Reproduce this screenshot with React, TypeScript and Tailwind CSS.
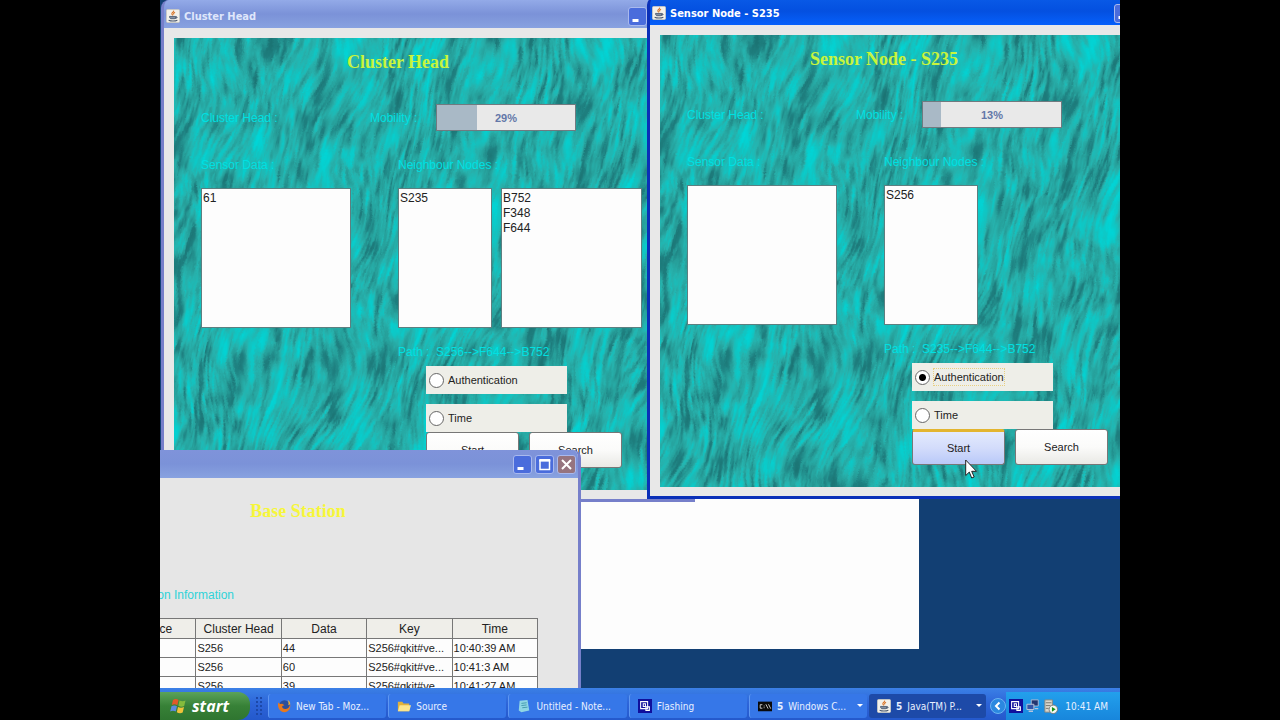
import React, { useId } from "react";

interface NodeWindowProps {
  title: string;
  active?: boolean;
  mobility: number;
  sensorData: string;
  neighbours: string;
  routes?: string;
  path: string;
  mode?: "auth" | "time";
}

const readings = [
  { source: "", head: "S256", data: "44", key: "S256#qkit#ve...", time: "10:40:39 AM" },
  { source: "", head: "S256", data: "60", key: "S256#qkit#ve...", time: "10:41:3 AM" },
  { source: "", head: "S256", data: "39", key: "S256#qkit#ve...", time: "10:41:27 AM" },
];

function JavaIcon() {
  return (
    <svg viewBox="0 0 16 16" className="h-[14px] w-[14px] shrink-0">
      <rect x="0.5" y="0.5" width="15" height="15" rx="1.5" fill="#f3f1ea" stroke="#c9c9c4" />
      <path d="M8.6 1.8c1 1.6-2.4 2.2-1.9 3.8.2.7.9 1 .9 1.7M10.3 3.6C8.6 4.6 8.3 5.3 9 6.3" fill="none" stroke="#d9772c" strokeWidth="1.3" />
      <path d="M4 8.5h7.2c0 1.4-.4 2.2-1.1 2.6H5.2C4.4 10.6 4 9.7 4 8.5zM11.3 8.8c2-.2 2 1.8-.9 2" fill="#8390a2" stroke="#4b5a70" />
      <path d="M3 12.8c2.5 1.2 7.5 1.2 10 0" fill="none" stroke="#4b5a70" strokeWidth="1.2" />
    </svg>
  );
}

function WindowButton({ kind }: { kind: "minimize" | "maximize" | "close" }) {
  const fill = kind === "close" ? "bg-[#96747f]" : "bg-[#4a6cdc]";
  return (
    <button aria-label={kind} className={`h-[19px] w-[19px] shrink-0 rounded-[3px] border border-[#a9b9ee] ${fill}`}>
      <svg viewBox="0 0 17 17" className="h-full w-full" fill="none" stroke="#fff">
        {kind === "minimize" && <path d="M3.5 12.5h6" strokeWidth="3" />}
        {kind === "maximize" && <path d="M4 4.5h9.5M4 4v9.5h9.5V4" strokeWidth="1.5" />}
        {kind === "maximize" && <path d="M3.3 4.2h11" strokeWidth="2.5" />}
        {kind === "close" && <path d="M4 4l9 9M13 4l-9 9" strokeWidth="2" />}
      </svg>
    </button>
  );
}

// Brushed teal backdrop: long slanted strands over broad light and dark patches
function Texture() {
  const id = useId();
  return (
    <svg viewBox="0 0 510 452" className="absolute inset-0 h-full w-full" aria-hidden="true">
      <filter id={id} x="0" y="0" width="100%" height="100%" colorInterpolationFilters="sRGB">
        <feTurbulence type="fractalNoise" baseFrequency="0.014 0.01" numOctaves="1" seed="4" result="bend" />
        <feTurbulence type="fractalNoise" baseFrequency="0.19 0.032" numOctaves="3" seed="11" result="grain" />
        <feDisplacementMap in="grain" in2="bend" scale="60" xChannelSelector="R" yChannelSelector="G" result="strands" />
        <feTurbulence type="fractalNoise" baseFrequency="0.04 0.016" numOctaves="3" seed="23" result="patches" />
        <feComposite in="strands" in2="patches" operator="arithmetic" k2="0.55" k3="0.55" k4="-0.03" />
        <feColorMatrix type="matrix" values="1 0 0 0 0  1 0 0 0 0  1 0 0 0 0  0 0 0 0 1" />
        <feComponentTransfer>
          <feFuncR type="table" tableValues="0.1 0.1 0.11 0.12 0.15 0.15 0.07 0.02 0 0 0" />
          <feFuncG type="table" tableValues="0.45 0.45 0.46 0.5 0.62 0.7 0.77 0.82 0.84 0.84 0.84" />
          <feFuncB type="table" tableValues="0.45 0.45 0.46 0.5 0.6 0.68 0.76 0.82 0.85 0.85 0.85" />
        </feComponentTransfer>
      </filter>
      <rect width="510" height="452" fill="#20b4b0" />
      <g transform="rotate(12 255 226)">
        <rect x="-120" y="-120" width="750" height="700" filter={`url(#${id})`} />
      </g>
    </svg>
  );
}

function Radio({ name, label, checked }: { name: string; label: string; checked?: boolean }) {
  return (
    <label className="flex h-7 w-[141px] items-center gap-1 bg-[#eeeee8] pl-[3px] text-[11px] text-[#222]">
      <input
        type="radio"
        name={name}
        defaultChecked={checked}
        className="h-[15px] w-[15px] appearance-none rounded-full border border-[#666] bg-white checked:bg-[radial-gradient(circle,#000_0_3px,#fff_4px)]"
      />
      <span className={checked ? "outline-1 outline-dotted outline-[#e8cf80]" : ""}>{label}</span>
    </label>
  );
}

function NodeWindow({ title, active, mobility, sensorData, neighbours, routes, path, mode }: NodeWindowProps) {
  const id = useId();
  const field = "block h-[140px] resize-none border border-[#5d7f80] bg-[#fdfdfd] px-px pt-[2px] text-xs leading-[15px] text-[#222] outline-none";
  const button = "h-9 w-[93px] rounded-[3px] border border-[#777] text-[11px] text-[#222]";
  return (
    <section
      className={`w-[534px] overflow-hidden rounded-t-lg border-x-[3px] border-b-[3px] font-['Liberation_Sans',Arial,sans-serif] ${
        active ? "border-[#0a2fb8] bg-[#0a2fb8]" : "border-[#767fca] bg-[#767fca]"
      }`}
    >
      <header
        className={`flex h-7 items-center gap-1 pt-1 pl-[2px] ${
          active
            ? "bg-linear-to-b from-[#0a5be8] via-[#0450e0] to-[#0660fb] text-white"
            : "bg-linear-to-b from-[#93aae8] via-[#7b92d8] to-[#88a2e0] text-[#dfe6fb]"
        }`}
      >
        <JavaIcon />
        <h2 className="w-[440px] pt-[2px] font-['DejaVu_Sans_Condensed','DejaVu_Sans',sans-serif] text-[11px] font-bold">{title}</h2>
        <WindowButton kind="minimize" />
      </header>
      <div className="bg-[#e8e8e8] px-[10px] pt-[10px] pb-[9px]">
        <div className="relative h-[452px] overflow-hidden">
          <Texture />
          <div className="relative">
            <h1 className="w-[448px] pt-3 text-center font-['Liberation_Serif',serif] text-lg leading-6 font-bold text-[#c8f53c]">
              {title}
            </h1>
            <div className="mt-[30px] flex h-[27px] items-center pl-[27px] text-xs text-[#00e0e2]">
              <span className="w-[169px]">Cluster Head :</span>
              <span className="w-[66px]">Mobility :</span>
              <div
                role="progressbar"
                aria-label="Mobility"
                aria-valuenow={mobility}
                className="relative h-[27px] w-[140px] border border-[#707a80] bg-[#e9e9e9]"
              >
                <div className="h-full bg-[#a9b9c6]" style={{ width: `${mobility}%` }} />
                <span className="absolute inset-0 text-center text-[11px] leading-[26px] font-bold text-[#6377a8]">{mobility}%</span>
              </div>
            </div>
            <div className="mt-[26px] flex pl-[27px] text-xs leading-4 text-[#00e0e2]">
              <label htmlFor={`${id}-data`} className="w-[197px]">Sensor Data :</label>
              <label htmlFor={`${id}-near`}>Neighbour Nodes :</label>
            </div>
            <div className="mt-[15px] flex pl-[27px]">
              <textarea id={`${id}-data`} readOnly defaultValue={sensorData} className={`${field} mr-[47px] w-[150px]`} />
              <textarea id={`${id}-near`} readOnly defaultValue={neighbours} className={`${field} mr-[9px] w-[94px]`} />
              {routes && <textarea aria-label="Routes" readOnly defaultValue={routes} className={`${field} w-[141px]`} />}
            </div>
            <p className="mt-4 flex pl-[224px] text-xs leading-4 text-[#00e0e2]">
              <span className="w-[38px]">Path :</span>
              <span>{path}</span>
            </p>
            <div className="mt-[6px] flex flex-col gap-[10px] pl-[252px]">
              <Radio name={`${id}-mode`} label="Authentication" checked={mode === "auth"} />
              <Radio name={`${id}-mode`} label="Time" checked={mode === "time"} />
            </div>
            <div className="flex gap-[10px] pl-[252px]">
              <button
                className={`${button} ${
                  active
                    ? "border-t-[3px] border-t-[#e3b52f] bg-linear-to-b from-[#e3eafd] via-[#d3dcfb] to-[#b9c9f8]"
                    : "bg-linear-to-b from-white via-[#fbfbfa] to-[#e9e9e5]"
                }`}
              >
                Start
              </button>
              <button className={`${button} bg-linear-to-b from-white via-[#fbfbfa] to-[#e9e9e5]`}>Search</button>
            </div>
          </div>
        </div>
      </div>
    </section>
  );
}

function BaseStationWindow() {
  const cell = "h-[19px] border border-[#777] px-px";
  return (
    <section className="w-[521px] overflow-hidden rounded-t-lg border-x-[3px] border-[#767fca] bg-[#e6e6e6] font-['Liberation_Sans',Arial,sans-serif]">
      <header className="flex h-7 items-center justify-end gap-[3px] bg-linear-to-b from-[#7f93da] via-[#7b92d8] to-[#88a2e0] pr-[2px]">
        <WindowButton kind="minimize" />
        <WindowButton kind="maximize" />
        <WindowButton kind="close" />
      </header>
      <h1 className="mt-[21px] w-[470px] text-center font-['Liberation_Serif',serif] text-lg leading-6 font-bold text-[#f6f63a]">
        Base Station
      </h1>
      <p className="mt-16 w-[171px] text-right text-xs leading-4 whitespace-nowrap text-[#2fd3d8]">Transmission Information</p>
      <table className="mt-[15px] ml-[47px] w-[428px] table-fixed border-collapse border border-[#666] bg-[#fdfdfd] text-[11px] leading-4 text-[#222]">
        <thead className="bg-[#efeee9] text-xs">
          <tr>
            {["Source", "Cluster Head", "Data", "Key", "Time"].map((name) => (
              <th key={name} className="h-5 border border-[#777] p-0 font-normal">{name}</th>
            ))}
          </tr>
        </thead>
        <tbody>
          {readings.map((row) => (
            <tr key={row.time}>
              <td className={cell}>{row.source}</td>
              <td className={cell}>{row.head}</td>
              <td className={cell}>{row.data}</td>
              <td className={cell}>{row.key}</td>
              <td className={cell}>{row.time}</td>
            </tr>
          ))}
        </tbody>
      </table>
    </section>
  );
}

function FirefoxIcon() {
  return (
    <svg viewBox="0 0 16 16" className="h-[14px] w-[14px] shrink-0">
      <circle cx="8.5" cy="7.5" r="6" fill="#2c4f9c" />
      <path d="M1.5 4C0 9 3 15 8.5 15 13 15 16 11 15 6c-.5 3-2 5-5 5.3C7 11.5 5.5 10 6 8l2.5-1L6 5.5 3.5 5.8z" fill="#e8791e" />
      <path d="M15 6c.5-2-1-4-3-5 1.3 2 1.5 4 .8 6z" fill="#f2b233" />
    </svg>
  );
}

function FolderIcon() {
  return (
    <svg viewBox="0 0 16 16" className="h-[14px] w-[14px] shrink-0">
      <path d="M1 3h5l1.5 2H14v9H1z" fill="#e0b13c" />
      <path d="M3 7h13l-2 7H1z" fill="#fbe58e" />
    </svg>
  );
}

function NotepadIcon() {
  return (
    <svg viewBox="0 0 16 16" className="h-[14px] w-[14px] shrink-0">
      <path d="M3 2l9-1 2 12-9 2-3-2z" fill="#8fd6e4" />
      <path d="M5 5l6-.7M5 7.500l6-.7M6 10l6-.7" stroke="#3d93a8" />
    </svg>
  );
}

function FlashingIcon() {
  return (
    <svg viewBox="0 0 16 16" className="h-[14px] w-[14px] shrink-0">
      <rect width="16" height="16" fill="#10109c" />
      <path d="M3 3h8v8H3zM6 5.500h2.500v3H6zM9 9h4v4H9z" fill="none" stroke="#fff" strokeWidth="1.2" />
    </svg>
  );
}

function ConsoleIcon() {
  return (
    <svg viewBox="0 0 16 16" className="h-[14px] w-[14px] shrink-0">
      <rect y="3" width="16" height="11" fill="#0a0a0a" />
      <path d="M5 6.500H2.500v4H5M7 7.500v1M7 9.500v1M9 6l2.500 5M12 6l2.500 5" fill="none" stroke="#ddd" />
    </svg>
  );
}

function NetworkIcon() {
  return (
    <svg viewBox="0 0 16 16" className="h-[14px] w-[14px]">
      <path d="M6 1h8v7H6z" fill="#23366f" stroke="#b6c4dc" />
      <path d="M1 6h8v6H1z" fill="#3456a8" stroke="#c6cfdf" />
      <path d="M3 14h5M10 11h4" stroke="#b6c4dc" strokeWidth="1.5" />
    </svg>
  );
}

function ServerIcon() {
  return (
    <svg viewBox="0 0 16 16" className="h-[15px] w-[15px]">
      <path d="M2 1h8v13H2z" fill="#d8d6cc" stroke="#8c8a80" />
      <path d="M3 4h6M3 7h5M3 10h3" stroke="#77756c" />
      <circle cx="11" cy="11" r="4.5" fill="#f4f8f2" stroke="#777" />
      <path d="M9.5 8.5l4 2.5-4 2.5z" fill="#129012" />
    </svg>
  );
}

const tasks = [
  { label: "New Tab - Moz...", Icon: FirefoxIcon },
  { label: "Source", Icon: FolderIcon },
  { label: "Untitled - Note...", Icon: NotepadIcon },
  { label: "Flashing", Icon: FlashingIcon },
  { label: "Windows C...", Icon: ConsoleIcon, count: 5 },
  { label: "Java(TM) P...", Icon: JavaIcon, count: 5, active: true },
];

function Taskbar() {
  return (
    <footer className="flex h-8 items-end bg-linear-to-b from-[#3b80e6] via-[#2d64d8] to-[#2459cc] font-['DejaVu_Sans_Condensed','DejaVu_Sans',sans-serif] text-[10px] text-[#e8f0ff]">
      <button className="flex h-7 w-[90px] shrink-0 items-center gap-1 rounded-r-xl bg-linear-to-b from-[#5ba35a] via-[#378137] to-[#2f7530] pl-[10px] font-['Open_Sans',sans-serif] text-base font-bold text-white italic">
        <svg viewBox="0 0 18 18" className="h-[18px] w-[18px]">
          <path d="M3 3c2-1.5 4-1 5.5 0L7.300 8.200C5.500 7 3.700 7 1.800 8z" fill="#e2592a" />
          <path d="M9.5 3.500c2 1 4 1 6 0L14.200 9c-2 1-4 .8-5.800-.3z" fill="#84bb3c" />
          <path d="M1.500 9.300c2-1 3.700-1 5.500 0L5.700 14.500C4 13.500 2 13.500.2 14.500z" fill="#5d8be0" />
          <path d="M8 10c2 1 4 1 6 0l-1.300 5.500c-2 1-4 .8-5.900-.3z" fill="#f0c23a" />
        </svg>
        start
      </button>
      <div className="flex h-7 w-[18px] shrink-0 items-center justify-center">
        <div className="h-5 w-2 bg-[radial-gradient(circle,#1c48a8_1px,transparent_1px)] bg-size-[4px_4px]" />
      </div>
      <div className="flex min-w-0 flex-1 gap-[2px] pb-[2px]">
        {tasks.map(({ label, Icon, count, active }) => (
          <button
            key={label}
            className={`flex h-6 min-w-0 flex-1 items-center gap-[5px] rounded-[3px] pl-2 whitespace-nowrap ${
              active ? "bg-[#1d4aa8]" : "border-l border-[#5f97f2] bg-[#3677e8]"
            }`}
          >
            <Icon />
            {count && <b>{count}</b>}
            <span>{label}</span>
            {count && (
              <svg viewBox="0 0 6 4" className="mr-1 ml-auto h-1 w-[6px] shrink-0">
                <path d="M0 0h6L3 3z" fill="#fff" />
              </svg>
            )}
          </button>
        ))}
      </div>
      <button aria-label="Show hidden icons" className="ml-1 flex h-7 w-4 shrink-0 items-center">
        <svg viewBox="0 0 16 16" className="h-4 w-4">
          <circle cx="8" cy="8" r="7.5" fill="#2b88e0" stroke="#6bb4f2" />
          <path d="M9.5 4.5L6 8l3.5 3.5" fill="none" stroke="#fff" strokeWidth="2" />
        </svg>
      </button>
      <div className="flex h-7 shrink-0 items-center gap-[3px] bg-linear-to-b from-[#23a0ec] to-[#1886dc] pr-3 pl-[3px]">
        <FlashingIcon />
        <NetworkIcon />
        <ServerIcon />
        <time className="pl-1">10:41 AM</time>
      </div>
    </footer>
  );
}

export default function App() {
  return (
    <div className="min-h-screen bg-black">
      <main className="mx-auto flex min-h-screen w-3/4 flex-col overflow-hidden">
        <div className="relative flex-1 overflow-hidden bg-[#123f73]">
          <div className="absolute top-[300px] left-[200px] h-[349px] w-[559px] bg-[#fdfdfd]" />
          <div className="absolute top-0 left-px">
            <NodeWindow
              title="Cluster Head"
              mobility={29}
              sensorData="61"
              neighbours="S235"
              routes={"B752\nF348\nF644"}
              path="S256-->F644-->B752"
            />
          </div>
          <div className="absolute top-[450px] left-[-100px]">
            <BaseStationWindow />
          </div>
          <div className="absolute top-[-3px] left-[487px]">
            <NodeWindow
              title="Sensor Node - S235"
              active
              mobility={13}
              sensorData=""
              neighbours="S256"
              path="S235-->F644-->B752"
              mode="auth"
            />
          </div>
          <svg viewBox="0 0 12 20" className="absolute top-[459px] left-[805px] h-5 w-3">
            <path d="M.7 1v15.500l3.600-3.400L6.700 19l2.500-1-2.500-5.700h4.800z" fill="#fff" stroke="#222" />
          </svg>
        </div>
        <Taskbar />
      </main>
    </div>
  );
}
